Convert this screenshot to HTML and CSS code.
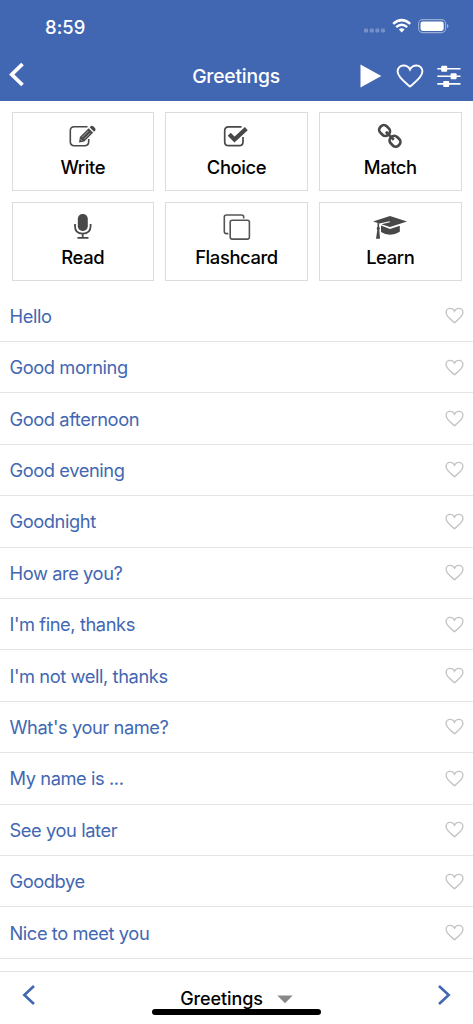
FILE: index.html
```
<!DOCTYPE html>
<html lang="en">
<head>
<meta charset="utf-8">
<title>Greetings</title>
<link rel="stylesheet" href="styles.css">
</head>
<body>
<svg class="defs" width="0" height="0"><symbol id="heart" viewBox="0 0 28 24"><path d="M14 22.600C9.500 18.800 1.600 13.200 1.600 7.600C1.600 4 4.300 1.500 7.500 1.500C10.600 1.500 12.900 3.200 14 5.500C15.100 3.200 17.400 1.500 20.500 1.500C23.700 1.500 26.400 4 26.400 7.600C26.400 13.200 18.500 18.800 14 22.600Z" fill="none" stroke="currentColor"/></symbol></svg>
<div class="app">
  <header class="header">
    <div class="status">
      <span class="time">8:59</span>
      <svg class="signals" width="86" height="18" viewBox="0 0 86 18">
        <g fill="#fff" opacity=".27"><rect x="1" y="11.500" width="4" height="4" rx="1.200"/><rect x="6.700" y="11.500" width="4" height="4" rx="1.200"/><rect x="12.400" y="11.500" width="4" height="4" rx="1.200"/><rect x="18" y="11.500" width="4" height="4" rx="1.200"/></g>
        <g fill="none" stroke="#fff" stroke-width="2.500"><path d="M30.200 6.900Q38.700 -.6 47.200 6.900"/><path d="M33.200 10.100Q38.700 5.400 44.200 10.100"/></g>
        <path d="M35.900 12.500Q38.700 10.200 41.500 12.500L38.700 15.600Z" fill="#fff"/>
        <rect x="55.600" y="2.600" width="27" height="13" rx="4" fill="none" stroke="#fff" stroke-opacity=".45" stroke-width="1.100"/>
        <rect x="57.500" y="4.400" width="23.200" height="9.500" rx="2.300" fill="#fff"/>
        <path d="M84 7Q85.500 8 85.500 9.100T84 11.200Z" fill="#fff" opacity=".5"/>
      </svg>
    </div>
    <div class="nav">
      <svg class="back" width="16" height="26" viewBox="0 0 16 26"><path d="M14.500 2L3.800 12.500L14.500 23" fill="none" stroke="#fff" stroke-width="3.800"/></svg>
      <h1 class="title">Greetings</h1>
      <div class="actions">
        <svg width="22" height="24" viewBox="0 0 22 24"><path d="M.5.5L21.300 12L.5 23.500Z" fill="#fff"/></svg>
        <svg class="fav" width="28" height="24"><use href="#heart"/></svg>
        <svg width="24" height="22" viewBox="0 0 24 22"><path d="M.3 3.800H23.500M.3 11.300H23.500M.3 18.900H23.500" stroke="#fff" stroke-width="1.600"/><g fill="#fff"><rect x="4.200" y=".8" width="6" height="6" rx="1"/><rect x="13.600" y="8.300" width="6" height="6" rx="1"/><rect x="6.200" y="15.900" width="6" height="6" rx="1"/></g></svg>
      </div>
    </div>
  </header>
  <section class="modes">
    <div class="card"><svg class="icon" viewBox="0 0 36 28"><path d="M22.500 4.800H9.300Q5.300 4.800 5.300 8.800V19.500Q5.300 23.700 9.300 23.700H19.500Q23.700 23.700 23.700 19.500V17" fill="none" stroke="#484848" stroke-width="1.600"/><path d="M14 20.500L14.900 15.100L23.700 6.300L28.100 10.700L19.300 19.500ZM24.700 5.300L26 4Q27.200 3.300 28.500 4.500L30 6Q31 7.300 30.300 8.400L29 9.700Z" fill="#484848"/><path d="M17 15.400L23.400 9M19.200 17.200L25.200 11.200M15.600 17.200L17.300 18.900" stroke="#ddd" stroke-width=".65"/></svg><span>Write</span></div>
    <div class="card"><svg class="icon" viewBox="0 0 36 28"><path d="M22.500 4.800H9.700Q5.700 4.800 5.700 8.800V19.700Q5.700 23.700 9.700 23.700H20Q24 23.700 24 19.700V15" fill="none" stroke="#484848" stroke-width="1.700"/><path d="M10.200 12.300L15.500 17.600L27.300 6.600" fill="none" stroke="#484848" stroke-width="4.200"/></svg><span>Choice</span></div>
    <div class="card"><svg class="icon" viewBox="0 0 36 28"><g fill="none" stroke="#484848" stroke-width="2.700"><rect x="7.100" y="4" width="11" height="9" rx="4" transform="rotate(45 12.600 8.500)"/><rect x="17.500" y="14.700" width="11" height="9" rx="4" transform="rotate(45 23 19.200)"/><path d="M13.900 9.800L21.800 17.700"/></g></svg><span>Match</span></div>
    <div class="card"><svg class="icon" viewBox="0 0 36 28"><rect x="12.800" y="2" width="10" height="17" rx="4.700" fill="#484848"/><path d="M10 12V14.300Q10 21.700 17.700 21.700T25.600 14.300V12M17.700 21.700V25.400M12.400 25.900H23.500" fill="none" stroke="#484848" stroke-width="1.800"/></svg><span>Read</span></div>
    <div class="card"><svg class="icon" viewBox="0 0 36 28"><g fill="none" stroke="#555" stroke-width="1.600"><path d="M9.300 21.600H7.500Q5.300 21.600 5.300 19.500V5Q5.300 3 7.500 3H22.600Q24.700 3 24.700 5V6.400"/><rect x="11.200" y="8.300" width="19.200" height="18.800" rx="2"/></g></svg><span>Flashcard</span></div>
    <div class="card"><svg class="icon" viewBox="0 0 36 28"><path d="M1 9.500L18 4L35 9.500L18 15L9.500 12.300L18 10.300L17.700 9.200L7.500 11.600ZM9 13.600L18 16.900L27.800 13.700V19.700Q23 22.800 18 22.800Q13 22.800 9 20.100Z" fill="#484848"/><path d="M7.100 11.200V14.500L8 16.500L7.300 18L8 26.700H4L5.300 18L4.600 16.500L5.500 14.500V11Z" fill="#484848"/></svg><span>Learn</span></div>
  </section>
  <ul class="phrases">
    <li><span>Hello</span><svg><use href="#heart"/></svg></li>
    <li><span>Good morning</span><svg><use href="#heart"/></svg></li>
    <li><span>Good afternoon</span><svg><use href="#heart"/></svg></li>
    <li><span>Good evening</span><svg><use href="#heart"/></svg></li>
    <li><span>Goodnight</span><svg><use href="#heart"/></svg></li>
    <li><span>How are you?</span><svg><use href="#heart"/></svg></li>
    <li><span>I'm fine, thanks</span><svg><use href="#heart"/></svg></li>
    <li><span>I'm not well, thanks</span><svg><use href="#heart"/></svg></li>
    <li><span>What's your name?</span><svg><use href="#heart"/></svg></li>
    <li><span class="dots">My name is ...</span><svg><use href="#heart"/></svg></li>
    <li><span>See you later</span><svg><use href="#heart"/></svg></li>
    <li><span>Goodbye</span><svg><use href="#heart"/></svg></li>
    <li><span>Nice to meet you</span><svg><use href="#heart"/></svg></li>
  </ul>
  <footer class="footer">
    <svg width="14" height="20" viewBox="0 0 14 20"><path d="M12 1L2.300 10L12 19" fill="none" stroke="#4267b2" stroke-width="2.600"/></svg>
    <div class="picker"><span>Greetings</span><svg width="16" height="9" viewBox="0 0 16 9"><path d="M.3.500H15.700L8 8.300Z" fill="#888"/></svg></div>
    <svg width="14" height="20" viewBox="0 0 14 20"><path d="M2 1L11.700 10L2 19" fill="none" stroke="#4267b2" stroke-width="2.600"/></svg>
    <div class="home"></div>
  </footer>
</div>
</body>
</html>
```
FILE: styles.css
```
* { box-sizing: border-box; }
body { margin: 0; background: #fff; font-family: Inter, "Liberation Sans", sans-serif; }
svg { display: block; flex: none; }
.app { width: 473px; height: 1024px; display: flex; flex-direction: column; overflow: hidden; }
.header { height: 100.500px; flex: none; background: #4267b2; color: #fff; }
.status { height: 50px; padding: 16.500px 24px 0 45px; display: flex; justify-content: space-between; align-items: flex-start; }
.time { font-size: 18.400px; line-height: 20px; font-weight: 500; letter-spacing: .1px; }
.nav { height: 50px; padding: 0 12px 0 8px; display: grid; grid-template-columns: 104px 1fr 101px; align-items: center; }
.title { margin: 0; font-size: 19.300px; line-height: 24px; font-weight: 500; text-align: center; letter-spacing: -.2px; padding-top: 2px; }
.actions { display: flex; justify-content: space-between; align-items: center; padding-top: 1px; }
.fav { stroke-width: 1.900; }
.modes { padding: 11.500px 11.500px 9.500px; display: grid; grid-template-columns: repeat(3, 142.500px); grid-auto-rows: 79px; gap: 11px 11.250px; flex: none; }
.card { border: 1px solid #dcdcdf; padding-top: 9px; display: flex; flex-direction: column; align-items: center; font-size: 18.400px; font-weight: 500; line-height: 24px; letter-spacing: -.4px; color: #000; }
.icon { width: 36px; height: 28px; margin-bottom: 5px; }
.phrases { margin: 0; padding: 0; list-style: none; flex: 1; min-height: 0; }
.phrases li { height: 51.420px; padding: 0 9px 0 9.500px; border-bottom: 1px solid #e4e4e6; display: flex; align-items: center; justify-content: space-between; color: #4267b2; font-size: 18.300px; line-height: 24px; letter-spacing: -.42px; }
.phrases svg { width: 19px; height: 17px; color: #c4c4c4; stroke-width: 2; }
.footer { height: 53px; flex: none; padding: 13px 22px 0 22px; border-top: 1px solid #e2e2e5; display: flex; align-items: flex-start; justify-content: space-between; position: relative; }
.picker { display: flex; align-items: center; gap: 14px; font-size: 18px; line-height: 24px; font-weight: 500; letter-spacing: -.1px; padding-top: 2px; }
.home { position: absolute; left: 152px; bottom: 9px; width: 169px; height: 6px; border-radius: 3px; background: #000; }
```
